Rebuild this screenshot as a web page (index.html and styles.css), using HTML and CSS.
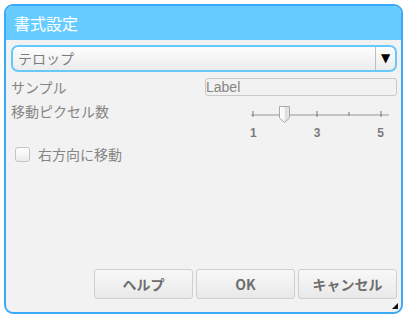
FILE: index.html
```html
<!DOCTYPE html>
<html lang="ja">
<head>
<meta charset="utf-8">
<link rel="stylesheet" href="styles.css">
</head>
<body>
<div class="dialog">
  <div class="titlebar">書式設定</div>
  <div class="content">
    <div class="combo">
      <span class="combo-text">テロップ</span>
      <span class="combo-btn">▼</span>
    </div>
    <div class="row sample-row">
      <span class="lbl">サンプル</span>
      <span class="field">Label</span>
    </div>
    <div class="row move-row">
      <span class="lbl">移動ピクセル数</span>
      <div class="slider">
        <svg width="142" height="20" viewBox="0 0 142 20">
          <defs>
            <linearGradient id="th" x1="0" x2="1" y1="0" y2="0">
              <stop offset="0" stop-color="#ffffff"/>
              <stop offset="0.5" stop-color="#f4f4f4"/>
              <stop offset="0.5" stop-color="#dcdcdc"/>
              <stop offset="1" stop-color="#e6e6e6"/>
            </linearGradient>
          </defs>
          <rect x="2" y="9" width="138" height="2" fill="#c4c4c4"/>
          <rect x="3.5" y="6" width="1" height="6" fill="#777"/>
          <rect x="67.5" y="6" width="1" height="6" fill="#777"/>
          <rect x="99.5" y="7" width="1" height="4" fill="#777"/>
          <rect x="131.5" y="6" width="1" height="6" fill="#777"/>
          <path d="M30.5 1.5 H40.5 V13 L35.5 17.5 L30.5 13 Z" fill="url(#th)" stroke="#a8a8a8" stroke-width="1"/>
        </svg>
        <div class="ticks"><span>1</span><span>3</span><span>5</span></div>
      </div>
    </div>
    <div class="row check-row">
      <span class="checkbox"></span>
      <span class="lbl">右方向に移動</span>
    </div>
    <div class="buttons">
      <button class="btn">ヘルプ</button>
      <button class="btn">OK</button>
      <button class="btn">キャンセル</button>
    </div>
  </div>
  <span class="grip"></span>
</div>
</body>
</html>
```

FILE: styles.css
```css
* { box-sizing: border-box; }
html, body {
  margin: 0;
  padding: 0;
  background: #ffffff;
  width: 407px;
  height: 318px;
  overflow: hidden;
  font-family: "Noto Sans CJK JP", "Noto Sans", sans-serif;
}
.dialog {
  position: relative;
  margin: 4px 0 0 4px;
  width: 399px;
  height: 310px;
  border: 2px solid #3ca9f7;
  border-radius: 9px;
  background: #f2f2f2;
  overflow: hidden;
  display: flex;
  flex-direction: column;
}
.titlebar {
  height: 34px;
  background: #66ccff;
  color: #ffffff;
  font-size: 16px;
  line-height: 34px;
  padding-left: 8px;
  flex: none;
}
.content {
  flex: 1;
  display: flex;
  flex-direction: column;
  padding: 5px 4px 13px 5px;
}
.combo {
  height: 27px;
  border: 2px solid #66c8fb;
  border-radius: 7px;
  background: linear-gradient(#fdfdfd, #ececec);
  display: flex;
  align-items: center;
}
.combo-text {
  flex: 1;
  font-size: 14px;
  color: #7d7d7d;
  padding-left: 5px;
  line-height: 23px;
}
.combo-btn {
  width: 20px;
  height: 23px;
  border-left: 1px solid #bdbdbd;
  font-size: 12px;
  color: #000;
  line-height: 23px;
  text-align: center;
  font-family: "DejaVu Sans", sans-serif;
}
.row {
  display: flex;
  align-items: center;
}
.lbl {
  font-size: 14px;
  color: #858585;
  line-height: 18px;
}
.sample-row {
  margin-top: 6px;
  justify-content: space-between;
}
.field {
  width: 192px;
  height: 18px;
  border: 1px solid #c8c8c8;
  border-radius: 3px;
  font-family: "Liberation Sans", sans-serif;
  font-size: 14px;
  line-height: 16px;
  color: #858585;
  padding-left: 0;
}
.move-row {
  margin-top: 8px;
  align-items: flex-start;
  justify-content: space-between;
}
.move-row .lbl { margin-top: -2px; }
.slider {
  width: 142px;
  margin-right: 6px;
  display: flex;
  flex-direction: column;
}
.slider svg { display: block; margin-top: 1px; }
.ticks {
  display: flex;
  justify-content: space-between;
  padding: 0 5px 0 1px;
  width: 140px;
  font-family: "Liberation Sans", sans-serif;
  font-weight: bold;
  font-size: 12px;
  color: #7a7a7a;
  line-height: 13px;
  margin-top: 2px;
}
.check-row {
  margin-top: 5px;
  padding-left: 4px;
}
.checkbox {
  width: 15px;
  height: 15px;
  border: 1px solid #c4c4c4;
  border-radius: 3px;
  background: linear-gradient(#ffffff, #ececec);
  margin-right: 8px;
}
.buttons {
  margin-top: auto;
  display: flex;
  justify-content: flex-end;
  gap: 3px;
}
.btn {
  width: 99px;
  height: 30px;
  border: 1px solid #cfcfcf;
  border-radius: 3px;
  background: linear-gradient(#f8f8f8, #e9e9e9);
  font-family: "Noto Sans CJK JP", "Noto Sans", sans-serif;
  font-weight: bold;
  font-size: 14px;
  color: #6e6e6e;
  padding: 0;
}
.grip {
  position: absolute;
  right: 3px;
  bottom: 3px;
  width: 0;
  height: 0;
  border-left: 6px solid transparent;
  border-bottom: 6px solid #111;
}
```
